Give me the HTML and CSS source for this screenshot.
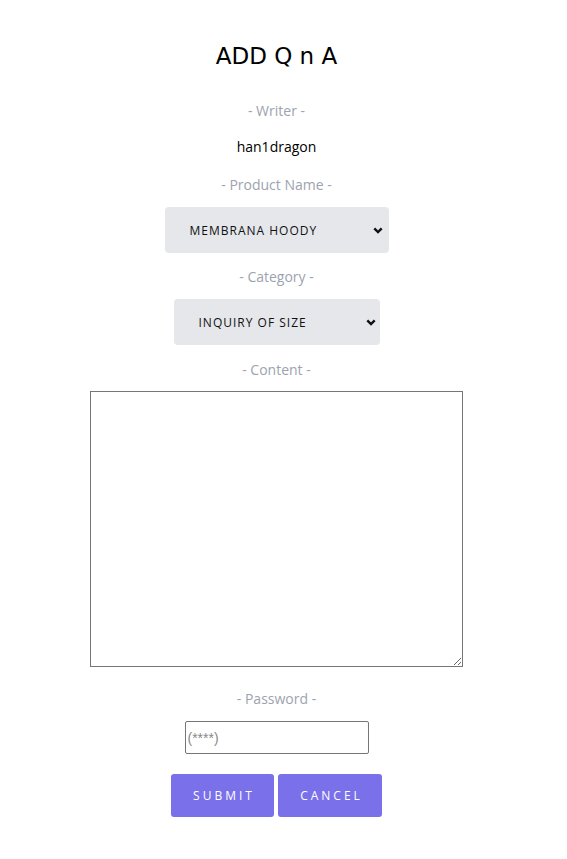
FILE: index.html
```html
<!DOCTYPE html>
<html lang="en">
<head>
<meta charset="utf-8">
<title>ADD Q n A</title>
<link rel="stylesheet" href="styles.css">
</head>
<body>
<main class="page">
  <form class="qna-form">
    <h1 class="title">ADD Q n A</h1>
    <div class="label label-writer">- Writer -</div>
    <div class="writer">han1dragon</div>
    <div class="label label-product">- Product Name -</div>
    <select class="select select-product">
      <option>MEMBRANA HOODY</option>
    </select>
    <div class="label label-category">- Category -</div>
    <select class="select select-category">
      <option>INQUIRY OF SIZE</option>
    </select>
    <div class="label label-content">- Content -</div>
    <textarea class="content"></textarea>
    <div class="label label-password">- Password -</div>
    <input class="password" type="password" placeholder="(****)">
    <div class="buttons">
      <button type="button" class="btn btn-submit">SUBMIT</button>
      <button type="button" class="btn btn-cancel">CANCEL</button>
    </div>
  </form>
</main>
</body>
</html>
```
FILE: styles.css
```css
html, body {
  margin: 0;
  padding: 0;
  background: #ffffff;
}
body {
  font-family: "Open Sans", "Noto Sans", sans-serif;
  color: #111;
}
.page {
  width: 553px;
}
.qna-form {
  display: flex;
  flex-direction: column;
  align-items: center;
}
.title {
  margin: 40px 0 0;
  font-family: "DejaVu Sans", sans-serif;
  font-weight: 400;
  font-size: 23px;
  line-height: 32px;
  color: #000;
}
.label {
  font-size: 14px;
  line-height: 20px;
  color: #9ca3af;
}
.label-writer {
  margin-top: 29px;
}
.writer {
  margin-top: 16px;
  font-size: 14px;
  line-height: 20px;
  color: #000;
}
.label-product {
  margin-top: 18px;
}
.label-category {
  margin-top: 14px;
}
.label-content {
  margin-top: 15px;
}
.label-password {
  margin-top: 22px;
}
.select {
  -webkit-appearance: none;
  appearance: none;
  margin-top: 12px;
  height: 46px;
  border: none;
  border-radius: 4px;
  background-color: #e5e7eb;
  background-image: url("data:image/svg+xml,%3Csvg xmlns='http://www.w3.org/2000/svg' width='10' height='7' viewBox='0 0 10 7'%3E%3Cpath d='M1.3 1.4 L5 5.1 L8.7 1.4' fill='none' stroke='%23111' stroke-width='2.4'/%3E%3C/svg%3E");
  background-repeat: no-repeat;
  background-size: 10px 7px;
  font-family: "Open Sans", "Noto Sans", sans-serif;
  font-size: 12px;
  letter-spacing: 1px;
  color: #111;
  padding: 0 20px 0 25px;
}
.select-product {
  width: 224px;
  background-position: right 6px center;
}
.select-category {
  width: 206px;
  background-position: right 4px center;
}
.content {
  margin-top: 11px;
  width: 373px;
  height: 276px;
  box-sizing: border-box;
  border: 1px solid #767676;
  border-radius: 0;
  padding: 2px;
  resize: both;
}
.password {
  margin-top: 12px;
  width: 184px;
  height: 33px;
  box-sizing: border-box;
  border: 1px solid #767676;
  border-radius: 2px;
  padding: 0 2px;
  font-family: "Liberation Sans", sans-serif;
  font-size: 14px;
}
.password::placeholder {
  color: #8a8a8a;
}
.buttons {
  margin-top: 20px;
  display: flex;
  gap: 4px;
}
.btn {
  height: 43px;
  border: none;
  border-radius: 3px;
  background: #7a70e9;
  color: #fff;
  font-family: "Open Sans", "Noto Sans", sans-serif;
  font-size: 12px;
  letter-spacing: 3px;
  padding: 0 0 0 3px;
}
.btn-submit {
  width: 103px;
}
.btn-cancel {
  width: 104px;
}
```
